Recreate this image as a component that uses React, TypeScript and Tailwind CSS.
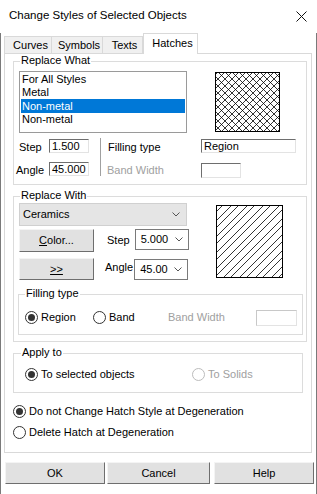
import React from "react";

const FONT = "font-['Liberation_Sans',Arial,sans-serif]";

function Chevron() {
  return (
    <svg width="8" height="5" viewBox="0 0 8 5" className="block">
      <path d="M0.5 0.5L4 4L7.5 0.5" fill="none" stroke="#555" strokeWidth="1" />
    </svg>
  );
}

function Radio({ checked = false, disabled = false }: { checked?: boolean; disabled?: boolean }) {
  return (
    <span
      className={`w-[13px] h-[13px] rounded-full border bg-white flex items-center justify-center shrink-0 ${
        disabled ? "border-[#bcbcbc]" : "border-[#333333]"
      }`}
    >
      {checked && <span className="w-[7px] h-[7px] rounded-full bg-[#333333]" />}
    </span>
  );
}

function Sunken({ className, children }: { className: string; children?: React.ReactNode }) {
  return (
    <div
      className={`border-t border-l border-b border-r border-t-[#6e6e6e] border-l-[#6e6e6e] border-b-[#e3e3e3] border-r-[#e3e3e3] bg-white pl-[2px] flex items-center ${className}`}
    >
      {children}
    </div>
  );
}

function Btn({ className, children }: { className: string; children: React.ReactNode }) {
  return (
    <div
      className={`h-[22px] bg-[#e1e1e1] border border-t-[#f4f4f4] border-l-[#f4f4f4] border-b-[#6e6e6e] border-r-[#6e6e6e] flex items-center justify-center ${className}`}
    >
      {children}
    </div>
  );
}

function Legend({ text, left }: { text: string; left: string }) {
  return (
    <span className={`absolute -top-[8px] ${left} bg-white px-[1px] leading-[13px]`}>{text}</span>
  );
}

function crossPath(w: number, h: number, step: number) {
  let d = "";
  for (let k = -h; k < w + h; k += step) {
    d += `M${k} 0L${k + h} ${h}`;
    d += `M${k} 0L${k - h} ${h}`;
  }
  return d;
}

function diagPath(w: number, h: number, period: number, gap: number) {
  let d = "";
  for (let k = 0; k < w + h + period; k += period) {
    d += `M${k} 0L${k - h} ${h}`;
    d += `M${k + gap} 0L${k + gap - h} ${h}`;
  }
  return d;
}

function CrossHatch() {
  return (
    <svg width="65" height="60" className="block">
      <clipPath id="c1">
        <rect width="65" height="60" />
      </clipPath>
      <path d={crossPath(65, 60, 7)} stroke="#000" strokeWidth="0.8" clipPath="url(#c1)" />
      <rect x="0.5" y="0.5" width="64" height="59" fill="none" stroke="#000" />
    </svg>
  );
}

function DiagHatch() {
  return (
    <svg width="67" height="73" className="block">
      <clipPath id="c2">
        <rect width="67" height="73" />
      </clipPath>
      <path d={diagPath(67, 73, 16, 7)} stroke="#000" strokeWidth="0.8" clipPath="url(#c2)" />
      <rect x="0.5" y="0.5" width="66" height="72" fill="none" stroke="#000" />
    </svg>
  );
}

export default function App() {
  return (
    <div className={`w-[317px] h-[494px] bg-white text-black ${FONT} text-[11px] leading-[13px] overflow-hidden`}>
      {/* Title bar */}
      <div className="h-[33px] flex items-center justify-between pl-[9px] pr-[10px] pb-[2px]">
        <span className="text-[11.5px]">Change Styles of Selected Objects</span>
        <svg width="11" height="11" viewBox="0 0 11 11" className="block mt-[2px]">
          <path d="M0.5 0.5L10.5 10.5M10.5 0.5L0.5 10.5" stroke="#111" strokeWidth="1" />
        </svg>
      </div>

      <div className="h-[461px] border-x border-[#7a7a7a] flex flex-col">
        {/* Tabs */}
        <div className="h-[20px] flex items-end pl-[3px]">
          <div className="h-[17px] w-[47px] bg-[#f0f0f0] border-t border-l border-[#d9d9d9] flex items-center justify-center pl-[5px]">
            Curves
          </div>
          <div className="h-[17px] w-[51px] bg-[#f0f0f0] border-t border-l border-[#d9d9d9] flex items-center justify-center pl-[4px]">
            Symbols
          </div>
          <div className="h-[17px] w-[41px] bg-[#f0f0f0] border-t border-x border-[#d9d9d9] flex items-center justify-center pl-[4px]">
            Texts
          </div>
          <div className="relative z-10 -mb-px h-[21px] w-[55px] bg-white border-t border-x border-[#d9d9d9] flex items-center justify-center pl-[4px] pb-[2px]">
            Hatches
          </div>
        </div>

        {/* Panel */}
        <div className="h-[400px] w-[308px] ml-[3px] border border-[#d9d9d9] bg-white pl-[8px] flex flex-col">
          {/* Replace What */}
          <div className="relative mt-[7px] w-[294px] h-[124px] border border-[#dcdcdc] pl-[5px] pt-[9px]">
            <Legend text="Replace What" left="left-[6px]" />
            <div className="flex">
              <div className="w-[168px] h-[62px] border border-[#9a9a9a] p-[1px] bg-white">
                <div className="h-[13px] px-[1px] flex items-center">For All Styles</div>
                <div className="h-[13px] px-[1px] flex items-center">Metal</div>
                <div className="h-[14px] px-[1px] flex items-center bg-[#0078d7] text-white">Non-metal</div>
                <div className="h-[13px] px-[1px] flex items-center">Non-metal</div>
              </div>
              <div className="ml-[28px] mt-[1px]">
                <CrossHatch />
              </div>
            </div>
            <div className="flex mt-[6px]">
              <div className="flex flex-col">
                <div className="flex items-center h-[14px]">
                  <span className="w-[30px] mt-[2px]">Step</span>
                  <Sunken className="w-[40px] h-[14px]">1.500</Sunken>
                </div>
                <div className="flex items-center h-[14px] mt-[9px]">
                  <span className="w-[33px] -ml-[3px] mt-[2px]">Angle</span>
                  <Sunken className="w-[40px] h-[14px]">45.000</Sunken>
                </div>
              </div>
              <div className="ml-[11px] -mt-[1px] w-px h-[38px] bg-[#a0a0a0]" />
              <div className="flex flex-col ml-[7px]">
                <div className="flex items-center h-[14px]">
                  <span className="w-[93px] mt-[2px]">Filling type</span>
                  <Sunken className="w-[95px] h-[14px]">Region</Sunken>
                </div>
                <div className="flex items-center h-[15px] mt-[10px]">
                  <span className="w-[94px] -ml-px text-[#a0a0a0]">Band Width</span>
                  <Sunken className="w-[40px] h-[15px]" />
                </div>
              </div>
            </div>
          </div>

          {/* Replace With */}
          <div className="relative mt-[11px] w-[294px] h-[146px] border border-[#dcdcdc] pl-[5px] pt-[6px]">
            <Legend text="Replace With" left="left-[6px]" />
            <div className="flex">
              <div className="w-[170px] flex flex-col">
                <div className="w-[168px] h-[23px] bg-[#e5e5e5] border border-[#d0d0d0] flex items-center justify-between pl-[3px] pr-[6px]">
                  <span>Ceramics</span>
                  <Chevron />
                </div>
                <div className="flex mt-[3px]">
                  <Btn className="w-[75px] h-[23px]">
                    <span>
                      <span className="underline">C</span>olor...
                    </span>
                  </Btn>
                  <span className="ml-[13px] mt-[5px]">Step</span>
                  <div className="ml-[5px] w-[54px] h-[21px] border border-[#7a7a7a] bg-white flex items-center justify-between pl-[5px] pr-[5px]">
                    <span>5.000</span>
                    <Chevron />
                  </div>
                </div>
                <div className="flex mt-[6px]">
                  <Btn className="w-[75px]">
                    <span className="underline">&gt;&gt;</span>
                  </Btn>
                  <span className="ml-[11px] mt-[3px]">Angle</span>
                  <div className="ml-[1px] mt-[1px] w-[54px] h-[21px] border border-[#7a7a7a] bg-white flex items-center justify-between pl-[5px] pr-[5px]">
                    <span>45.00</span>
                    <Chevron />
                  </div>
                </div>
              </div>
              <div className="ml-[27px] mt-[2px]">
                <DiagHatch />
              </div>
            </div>

            {/* Filling type subgroup */}
            <div className="relative mt-[14px] -ml-px w-[285px] h-[41px] border border-[#dcdcdc] pl-[6px]">
              <Legend text="Filling type" left="left-[6px]" />
              <div className="flex items-center h-[13px] mt-[16px]">
                <div className="w-[68px] flex items-center">
                  <Radio checked />
                  <span className="ml-[3px]">Region</span>
                </div>
                <div className="w-[75px] flex items-center">
                  <Radio />
                  <span className="ml-[3px]">Band</span>
                </div>
                <span className="w-[88px] text-[#a0a0a0]">Band Width</span>
                <Sunken className="w-[41px] h-[16px] border-t-[#c8c8c8] border-l-[#c8c8c8] border-b-[#c8c8c8] border-r-[#c8c8c8]" />
              </div>
            </div>
          </div>

          {/* Apply to */}
          <div className="relative mt-[11px] w-[290px] h-[40px] border border-[#dcdcdc] pl-[11px]">
            <Legend text="Apply to" left="left-[7px]" />
            <div className="flex items-center h-[13px] mt-[14px]">
              <div className="w-[167px] flex items-center">
                <Radio checked />
                <span className="ml-[3px]">To selected objects</span>
              </div>
              <div className="flex items-center">
                <Radio disabled />
                <span className="ml-[3px] text-[#a0a0a0]">To Solids</span>
              </div>
            </div>
          </div>

          <div className="flex items-center h-[13px] mt-[12px]">
            <Radio checked />
            <span className="ml-[3px]">Do not Change Hatch Style at Degeneration</span>
          </div>
          <div className="flex items-center h-[13px] mt-[8px]">
            <Radio />
            <span className="ml-[3px]">Delete Hatch at Degeneration</span>
          </div>
        </div>

        {/* Buttons */}
        <div className="flex mt-[9px] pl-[4px]">
          <Btn className="w-[100px]">OK</Btn>
          <Btn className="w-[103px] ml-[2px]">Cancel</Btn>
          <Btn className="w-[100px] ml-[4px]">Help</Btn>
        </div>
      </div>
    </div>
  );
}
